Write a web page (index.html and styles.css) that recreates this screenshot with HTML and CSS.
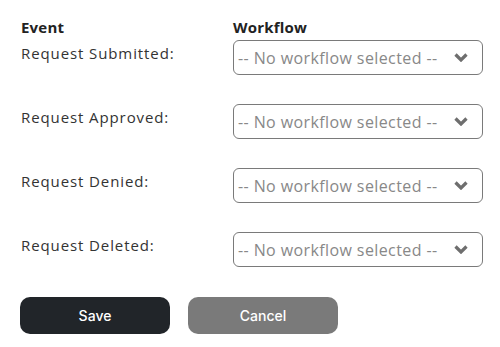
FILE: index.html
```html
<!DOCTYPE html>
<html lang="en">
<head>
    <meta charset="UTF-8" />
    <title>Workflow Events</title>
    <link rel="stylesheet" href="styles.css">
</head>
<body>
    <form class="event-form">
        <div class="event-grid">
            <div class="col-head">Event</div>
            <div class="col-head">Workflow</div>

            <label class="event-label" for="wf-submitted">Request Submitted:</label>
            <div class="select-wrap">
                <select id="wf-submitted">
                    <option>-- No workflow selected --</option>
                </select>
                <svg class="chevron" viewBox="0 0 14 9" width="14" height="9"><path d="M1.5 1.5 L7 7 L12.5 1.5" /></svg>
            </div>

            <label class="event-label" for="wf-approved">Request Approved:</label>
            <div class="select-wrap">
                <select id="wf-approved">
                    <option>-- No workflow selected --</option>
                </select>
                <svg class="chevron" viewBox="0 0 14 9" width="14" height="9"><path d="M1.5 1.5 L7 7 L12.5 1.5" /></svg>
            </div>

            <label class="event-label" for="wf-denied">Request Denied:</label>
            <div class="select-wrap">
                <select id="wf-denied">
                    <option>-- No workflow selected --</option>
                </select>
                <svg class="chevron" viewBox="0 0 14 9" width="14" height="9"><path d="M1.5 1.5 L7 7 L12.5 1.5" /></svg>
            </div>

            <label class="event-label" for="wf-deleted">Request Deleted:</label>
            <div class="select-wrap">
                <select id="wf-deleted">
                    <option>-- No workflow selected --</option>
                </select>
                <svg class="chevron" viewBox="0 0 14 9" width="14" height="9"><path d="M1.5 1.5 L7 7 L12.5 1.5" /></svg>
            </div>
        </div>

        <div class="actions">
            <button type="submit" class="btn btn-save">Save</button>
            <button type="button" class="btn btn-cancel">Cancel</button>
        </div>
    </form>
</body>
</html>
```

FILE: styles.css
```css
* {
    box-sizing: border-box;
}
body {
    margin: 0;
    background: #fff;
    font-family: 'Open Sans', Arial, sans-serif;
    color: #333;
}
.event-form {
    padding: 17px 0 0 21px;
}
.event-grid {
    display: grid;
    grid-template-columns: 212px 250px;
}
.col-head {
    font-weight: 700;
    font-size: 15px;
    color: #222;
    line-height: 20px;
    height: 23px;
    letter-spacing: 0.2px;
}
.event-label {
    font-size: 15px;
    line-height: 20px;
    padding-top: 3px;
    letter-spacing: 0.9px;
    height: 64px;
}
.select-wrap {
    position: relative;
    height: 35px;
}
.select-wrap select {
    -webkit-appearance: none;
    appearance: none;
    width: 250px;
    height: 35px;
    border: 1px solid #7a7a7a;
    border-radius: 6px;
    background: #fff;
    padding: 0 0 0 4px;
    font-family: 'Open Sans', Arial, sans-serif;
    font-size: 16px;
    letter-spacing: 0.4px;
    color: #888;
}
.chevron {
    position: absolute;
    right: 15px;
    top: 13px;
    fill: none;
    stroke: #6e6e6e;
    stroke-width: 3.2;
    pointer-events: none;
}
.actions {
    display: flex;
    gap: 18px;
    margin-top: 1px;
    margin-left: -1px;
}
.btn {
    width: 150px;
    height: 37px;
    border: none;
    border-radius: 10px;
    color: #fff;
    font-family: Inter, Arial, sans-serif;
    font-size: 14px;
    font-weight: 500;
    cursor: pointer;
}
.btn-save {
    background: #212529;
}
.btn-cancel {
    background: #7a7a7a;
}
```
